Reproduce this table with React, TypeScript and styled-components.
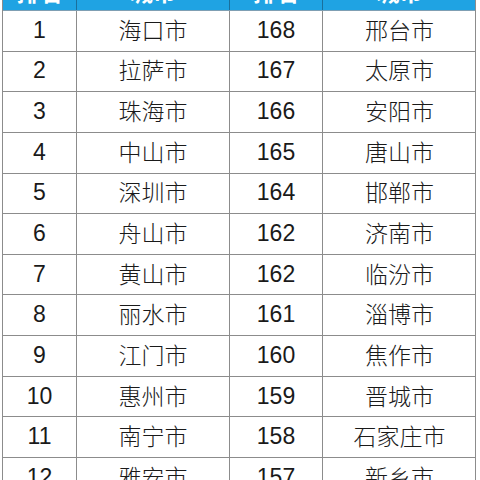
import { FC } from 'react'
import styled, { createGlobalStyle } from 'styled-components'

const ROWS: [string, string, string, string][] = [
  ['1', '海口市', '168', '邢台市'],
  ['2', '拉萨市', '167', '太原市'],
  ['3', '珠海市', '166', '安阳市'],
  ['4', '中山市', '165', '唐山市'],
  ['5', '深圳市', '164', '邯郸市'],
  ['6', '舟山市', '162', '济南市'],
  ['7', '黄山市', '162', '临汾市'],
  ['8', '丽水市', '161', '淄博市'],
  ['9', '江门市', '160', '焦作市'],
  ['10', '惠州市', '159', '晋城市'],
  ['11', '南宁市', '158', '石家庄市'],
  ['12', '雅安市', '157', '新乡市'],
]

const HEADERS = ['排名', '城市', '排名', '城市']

const App: FC = () => {
  return (
    <Page>
      <GlobalStyle />
      <Table>
        <HeaderRow>
          {HEADERS.map((h, i) => (
            <HeaderCell key={i}>{h}</HeaderCell>
          ))}
        </HeaderRow>
        {ROWS.map((row) => (
          <Row key={row[0]}>
            {row.map((cell, i) => (
              <Cell key={i} $city={i % 2 === 1}>
                {cell}
              </Cell>
            ))}
          </Row>
        ))}
      </Table>
    </Page>
  )
}

export default App

const GlobalStyle = createGlobalStyle`
  html, body {
    margin: 0;
    padding: 0;
    background: #ffffff;
  }
  * {
    box-sizing: border-box;
  }
`

const Page = styled.div`
  width: 480px;
  height: 480px;
  overflow: hidden;
  background: #ffffff;
`

const Table = styled.div`
  margin: -26px 0 0 2px;
  width: 474px;
  border-left: 1px solid #8c8c8c;
  border-right: 1px solid #8c8c8c;
`

const Row = styled.div`
  display: grid;
  grid-template-columns: 74px 153px 93px 153px;
  height: 40.65px;
  border-bottom: 1px solid #8c8c8c;
`

const HeaderRow = styled(Row)`
  height: 37px;
  background: #1fa3e3;
  border-bottom: 1px solid #7f9fb3;
`

const Cell = styled.div<{ $city?: boolean }>`
  display: flex;
  align-items: center;
  justify-content: center;
  border-right: 1px solid #8c8c8c;
  font-family: ${(p) =>
    p.$city
      ? "'Noto Sans CJK SC', sans-serif"
      : "'Liberation Sans', Arial, sans-serif"};
  font-weight: ${(p) => (p.$city ? 300 : 400)};
  font-size: 23px;
  line-height: 1;
  color: #1a1a1a;
  padding-bottom: ${(p) => (p.$city ? '3px' : '1px')};

  &:last-child {
    border-right: none;
  }
`

const HeaderCell = styled(Cell)`
  color: #ffffff;
  font-family: 'Noto Sans CJK SC', sans-serif;
  font-weight: bold;
  border-right-color: #1a6f9c;
`
